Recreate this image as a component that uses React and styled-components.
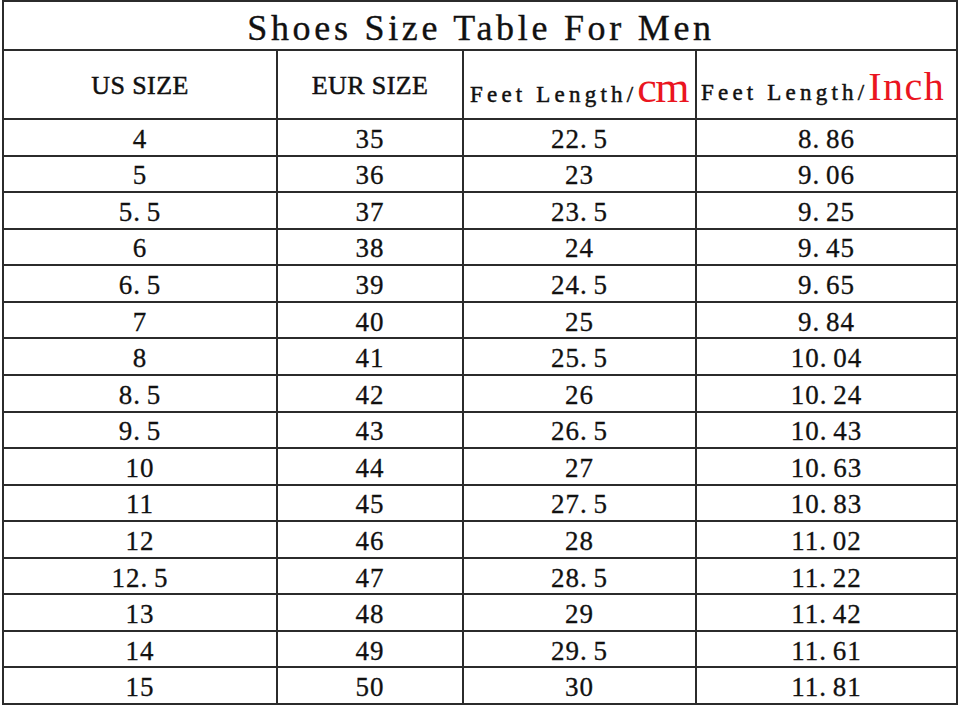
import React from "react";
import styled, { createGlobalStyle } from "styled-components";

const Global = createGlobalStyle`
  html, body {
    margin: 0;
    padding: 0;
    background: #fff;
  }
  body {
    font-family: "Liberation Serif", serif;
    color: #111;
  }
`;

const Table = styled.div`
  margin-left: 2px;
  width: 956px;
  display: grid;
  grid-template-columns: 274px 186px 233px 261px;
  grid-template-rows: 49px 69px repeat(16, 36.5625px);
  border-left: 2px solid #2b2b2b;
  border-top: 2px solid #2b2b2b;
  box-sizing: border-box;
  background: #fff;
`;

const Cell = styled.div`
  display: flex;
  align-items: center;
  justify-content: center;
  border-right: 2px solid #2b2b2b;
  border-bottom: 2px solid #2b2b2b;
  box-sizing: border-box;
  overflow: hidden;
  line-height: 1;
`;

const TitleCell = styled(Cell)`
  grid-column: 1 / -1;
  padding-top: 4px;
  padding-left: 2px;
`;

const Title = styled.span`
  font-family: "Liberation Serif", serif;
  font-size: 36px;
  letter-spacing: 3.7px;
  -webkit-text-stroke: 0.35px #111;
  white-space: nowrap;
`;

const HeadCell = styled(Cell)`
  align-items: ${(p) => (p.$low ? "flex-end" : "center")};
  justify-content: ${(p) => (p.$low ? "flex-start" : "center")};
  padding-top: ${(p) => (p.$low ? 0 : 3)}px;
  padding-bottom: ${(p) => p.$pb || 0}px;
  padding-left: ${(p) => p.$pl || 0}px;
`;

const HeadText = styled.span`
  font-family: "Liberation Serif", serif;
  font-size: 26px;
  letter-spacing: 0.4px;
  -webkit-text-stroke: 0.5px #111;
  white-space: nowrap;
`;

const LengthLabel = styled.span`
  display: inline-flex;
  align-items: baseline;
  white-space: nowrap;
`;

const Small = styled.span`
  font-family: "Liberation Serif", serif;
  font-size: 23px;
  letter-spacing: 4.2px;
  -webkit-text-stroke: 0.5px #111;
`;

const Unit = styled.span`
  font-family: "Liberation Serif", serif;
  color: #ea1520;
  font-size: ${(p) => p.$size}px;
  letter-spacing: ${(p) => p.$ls || 0}px;
`;

const DataCell = styled(Cell)`
  font-family: "Liberation Serif", serif;
  font-size: 27px;
  letter-spacing: 1px;
  padding-top: 4px;
  -webkit-text-stroke: 0.3px #111;
`;

const Dot = styled.span`
  display: inline-block;
  width: 0.5em;
  text-align: left;
`;

const rows = [
  ["4", "35", "22.5", "8.86"],
  ["5", "36", "23", "9.06"],
  ["5.5", "37", "23.5", "9.25"],
  ["6", "38", "24", "9.45"],
  ["6.5", "39", "24.5", "9.65"],
  ["7", "40", "25", "9.84"],
  ["8", "41", "25.5", "10.04"],
  ["8.5", "42", "26", "10.24"],
  ["9.5", "43", "26.5", "10.43"],
  ["10", "44", "27", "10.63"],
  ["11", "45", "27.5", "10.83"],
  ["12", "46", "28", "11.02"],
  ["12.5", "47", "28.5", "11.22"],
  ["13", "48", "29", "11.42"],
  ["14", "49", "29.5", "11.61"],
  ["15", "50", "30", "11.81"],
];

// period in the source font is a full half-width cell, so pad it
const Num = ({ value }) => {
  const [a, b] = value.split(".");
  if (b === undefined) return <span>{a}</span>;
  return (
    <span>
      {a}
      <Dot>.</Dot>
      {b}
    </span>
  );
};

export default function App() {
  return (
    <>
      <Global />
      <Table>
        <TitleCell>
          <Title>Shoes Size Table For Men</Title>
        </TitleCell>
        <HeadCell>
          <HeadText>US SIZE</HeadText>
        </HeadCell>
        <HeadCell>
          <HeadText>EUR SIZE</HeadText>
        </HeadCell>
        <HeadCell $low $pb={8} $pl={6}>
          <LengthLabel>
            <Small>Feet Length/</Small>
            <Unit $size={44} $ls={-1.5}>cm</Unit>
          </LengthLabel>
        </HeadCell>
        <HeadCell $low $pb={11} $pl={4}>
          <LengthLabel>
            <Small>Feet Length/</Small>
            <Unit $size={40} $ls={1.5}>Inch</Unit>
          </LengthLabel>
        </HeadCell>
        {rows.map((r, i) =>
          r.map((v, j) => (
            <DataCell key={i + "-" + j}>
              <Num value={v} />
            </DataCell>
          ))
        )}
      </Table>
    </>
  );
}
